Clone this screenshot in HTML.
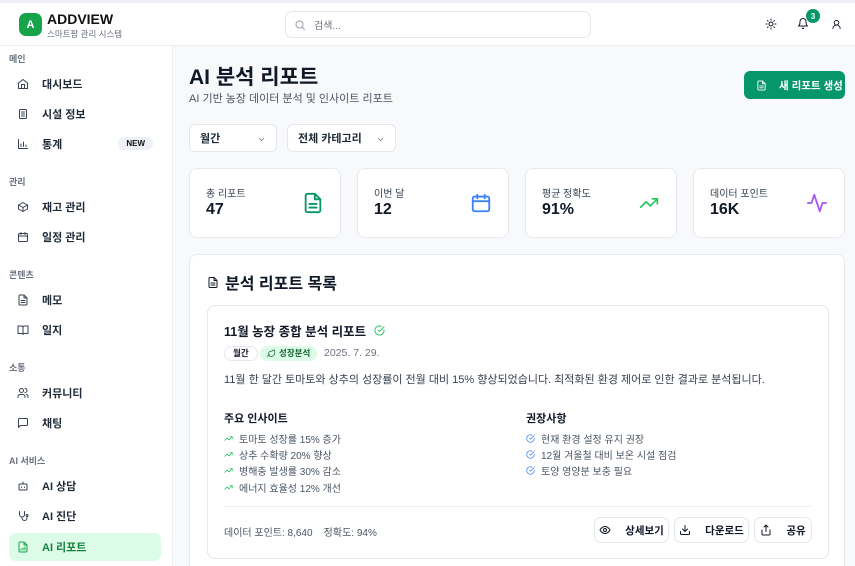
<!DOCTYPE html>
<html style="overflow:hidden;width:855px;height:566px"><head><meta charset="utf-8"><style>
*{box-sizing:border-box;margin:0;padding:0}
body{width:855px;height:566px;overflow:hidden;font-family:"Liberation Sans","Noto Sans CJK KR",sans-serif;color:#111827;background:#f8f9fb;position:relative}
.a{position:absolute}
svg{display:block}
.ic{fill:none;stroke:currentColor;stroke-width:2;stroke-linecap:round;stroke-linejoin:round}
.hdr{left:0;top:0;width:855px;height:46px;background:#fff;border-top:3px solid #eef0f5;border-bottom:1px solid #eceef2}
.side{left:0;top:46px;width:173px;height:520px;background:#fff;border-right:1px solid #eceef2}
.sec{position:absolute;left:9px;font-size:9px;color:#6b7280;font-weight:bold}
.it{position:absolute;left:9px;width:152px;height:28px;font-size:11px;font-weight:bold;color:#1f2937;display:flex;align-items:center;padding-left:8px;border-radius:7px}
.it svg{width:12px;height:12px;margin-right:13px;color:#374151}
.card{background:#fff;border:1px solid #e7e9ee;border-radius:8px}
.sel{background:#fff;border:1px solid #e5e7eb;border-radius:6px;height:28px;font-size:11px;font-weight:bold;display:flex;align-items:center;padding-left:10px;color:#1f2937}
.stat .l{position:absolute;left:16px;top:16px;font-size:10px;color:#374151}
.stat .v{position:absolute;left:16px;top:32px;font-size:16px;font-weight:bold}
.li{font-size:10px;color:#4b5563;height:16.3px;display:flex;align-items:center}
.li svg{width:9px;height:9px;margin-right:6px}
.btn{position:absolute;top:211px;height:26px;border:1px solid #e5e7eb;border-radius:7px;background:#fff;font-size:10.5px;font-weight:bold;display:flex;align-items:center;justify-content:center;gap:14px}
.btn svg{width:12px;height:12px}
</style></head><body>
<div class="a hdr">
 <div class="a" style="left:19px;top:10px;width:23px;height:23px;background:#16a34a;border-radius:7px;color:#fff;font-size:11px;font-weight:bold;display:flex;align-items:center;justify-content:center">A</div>
 <div class="a" style="left:47px;top:8px;font-size:14px;font-weight:bold;color:#111">ADDVIEW</div>
 <div class="a" style="left:47px;top:25px;font-size:8.5px;color:#6b7280">스마트팜 관리 시스템</div>
 <div class="a" style="left:285px;top:8px;width:306px;height:27px;border:1px solid #e5e7eb;border-radius:7px;display:flex;align-items:center;padding-left:8px;font-size:10px;color:#6b7280"><svg class="ic" width="12" height="12" viewBox="0 0 24 24" style="margin-right:8px;color:#9ca3af"><circle cx="11" cy="11" r="7"/><path d="M21 21l-4.3-4.3"/></svg>검색...</div>
 <svg class="a ic" style="left:765px;top:15px" width="12" height="12" viewBox="0 0 24 24"><circle cx="12" cy="12" r="4"/><path d="M12 2v2M12 20v2M4.9 4.9l1.4 1.4M17.7 17.7l1.4 1.4M2 12h2M20 12h2M6.3 17.7l-1.4 1.4M19.1 4.9l-1.4 1.4"/></svg>
 <svg class="a ic" style="left:797px;top:14px" width="12" height="13" viewBox="0 0 24 24"><path d="M6 8a6 6 0 0 1 12 0c0 7 3 9 3 9H3s3-2 3-9M10.3 21a1.9 1.9 0 0 0 3.4 0"/></svg>
 <div class="a" style="left:806px;top:6px;width:14px;height:14px;border-radius:50%;background:#059669;color:#fff;font-size:8px;font-weight:bold;display:flex;align-items:center;justify-content:center">3</div>
 <svg class="a ic" style="left:831px;top:16px" width="11" height="11" viewBox="0 0 24 24"><circle cx="12" cy="8" r="5"/><path d="M20 21a8 8 0 0 0-16 0"/></svg>
</div>
<div class="a side">
 <div class="sec" style="top:6px">메인</div>
 <div class="it" style="top:24px"><svg class="ic" viewBox="0 0 24 24"><path d="M3 10l9-7 9 7v11H3z"/><path d="M9 21v-8h6v8"/></svg>대시보드</div>
 <div class="it" style="top:54px"><svg class="ic" viewBox="0 0 24 24"><rect x="5" y="3" width="14" height="18" rx="2"/><path d="M9 8h6M9 12h6M9 16h6"/></svg>시설 정보</div>
 <div class="it" style="top:84px"><svg class="ic" viewBox="0 0 24 24"><path d="M3 3v18h18M8 17v-5M13 17V8M18 17v-3"/></svg>통계<span style="position:absolute;right:8px;top:7px;background:#eef1f6;border-radius:8px;font-size:8px;padding:2px 8px;color:#111">NEW</span></div>
 <div class="sec" style="top:129px">관리</div>
 <div class="it" style="top:147px"><svg class="ic" viewBox="0 0 24 24"><path d="M21 8l-9-5-9 5v8l9 5 9-5z"/><path d="M3 8l9 5 9-5M12 13v8"/></svg>재고 관리</div>
 <div class="it" style="top:177px"><svg class="ic" viewBox="0 0 24 24"><rect x="3" y="5" width="18" height="16" rx="2"/><path d="M3 10h18M8 3v4M16 3v4"/></svg>일정 관리</div>
 <div class="sec" style="top:222px">콘텐츠</div>
 <div class="it" style="top:240px"><svg class="ic" viewBox="0 0 24 24"><path d="M14 2H6a2 2 0 0 0-2 2v16a2 2 0 0 0 2 2h12a2 2 0 0 0 2-2V8z"/><path d="M14 2v6h6M8 13h8M8 17h8"/></svg>메모</div>
 <div class="it" style="top:270px"><svg class="ic" viewBox="0 0 24 24"><path d="M2 4h7a3 3 0 0 1 3 3v14a2 2 0 0 0-2-2H2zM22 4h-7a3 3 0 0 0-3 3v14a2 2 0 0 1 2-2h8z"/></svg>일지</div>
 <div class="sec" style="top:315px">소통</div>
 <div class="it" style="top:333px"><svg class="ic" viewBox="0 0 24 24"><circle cx="9" cy="7" r="4"/><path d="M2 21v-2a4 4 0 0 1 4-4h6a4 4 0 0 1 4 4v2M16 3a4 4 0 0 1 0 8M22 21v-2a4 4 0 0 0-3-4"/></svg>커뮤니티</div>
 <div class="it" style="top:363px"><svg class="ic" viewBox="0 0 24 24"><path d="M21 15a2 2 0 0 1-2 2H7l-4 4V5a2 2 0 0 1 2-2h14a2 2 0 0 1 2 2z"/></svg>채팅</div>
 <div class="sec" style="top:408px">AI 서비스</div>
 <div class="it" style="top:426px"><svg class="ic" viewBox="0 0 24 24"><rect x="4" y="8" width="16" height="12" rx="2"/><path d="M12 8V4M9 14v1M15 14v1"/></svg>AI 상담</div>
 <div class="it" style="top:456px"><svg class="ic" viewBox="0 0 24 24"><path d="M5 3v6a5 5 0 0 0 10 0V3M10 14v2a5 5 0 0 0 10 0v-3"/><circle cx="20" cy="11" r="2"/></svg>AI 진단</div>
 <div class="it" style="top:487px;background:#dcfce7;color:#15803d"><svg class="ic" viewBox="0 0 24 24" style="color:#16a34a"><path d="M14 2H6a2 2 0 0 0-2 2v16a2 2 0 0 0 2 2h12a2 2 0 0 0 2-2V8z"/><path d="M14 2v6h6M8 18v-2M12 18v-4M16 18v-6"/></svg>AI 리포트</div>
</div>

<div class="a" style="left:189px;top:61px;font-size:21px;font-weight:bold">AI 분석 리포트</div>
<div class="a" style="left:189px;top:90px;font-size:11px;color:#4b5563">AI 기반 농장 데이터 분석 및 인사이트 리포트</div>
<div class="a" style="left:744px;top:71px;width:101px;height:28px;background:#059669;border-radius:6px;color:#fff;font-size:10.5px;font-weight:bold;display:flex;align-items:center;padding-left:12px;gap:12px"><svg class="ic" width="11" height="11" viewBox="0 0 24 24"><path d="M14 2H6a2 2 0 0 0-2 2v16a2 2 0 0 0 2 2h12a2 2 0 0 0 2-2V8z"/><path d="M14 2v6h6M8 13h8M8 17h8"/></svg>새 리포트 생성</div>
<div class="a sel" style="left:189px;top:124px;width:88px">월간<svg class="ic a" style="right:10px;top:10px;color:#6b7280" width="9" height="9" viewBox="0 0 24 24"><path d="M6 9l6 6 6-6"/></svg></div>
<div class="a sel" style="left:287px;top:124px;width:109px">전체 카테고리<svg class="ic a" style="right:10px;top:10px;color:#6b7280" width="9" height="9" viewBox="0 0 24 24"><path d="M6 9l6 6 6-6"/></svg></div>

<div class="a card stat" style="left:189px;top:168px;width:152px;height:70px"><div class="l">총 리포트</div><div class="v">47</div><svg class="ic a" style="left:112px;top:22px;color:#059669" width="22" height="24" viewBox="0 0 24 24"><path d="M14 2H6a2 2 0 0 0-2 2v16a2 2 0 0 0 2 2h12a2 2 0 0 0 2-2V8z"/><path d="M14 2v6h6M8 13h8M8 17h8"/></svg></div>
<div class="a card stat" style="left:357px;top:168px;width:152px;height:70px"><div class="l">이번 달</div><div class="v">12</div><svg class="ic a" style="left:112px;top:22px;color:#3b82f6" width="22" height="24" viewBox="0 0 24 24"><rect x="3" y="5" width="18" height="16" rx="2"/><path d="M3 10h18M8 3v4M16 3v4"/></svg></div>
<div class="a card stat" style="left:525px;top:168px;width:152px;height:70px"><div class="l">평균 정확도</div><div class="v">91%</div><svg class="ic a" style="left:112px;top:24px;color:#22c55e" width="22" height="20" viewBox="0 0 24 24"><path d="M22 7l-8.5 8.5-5-5L2 17M16 7h6v6"/></svg></div>
<div class="a card stat" style="left:693px;top:168px;width:152px;height:70px"><div class="l">데이터 포인트</div><div class="v">16K</div><svg class="ic a" style="left:112px;top:22px;color:#a855f7" width="22" height="24" viewBox="0 0 24 24"><path d="M22 12h-4l-3 9L9 3l-3 9H2"/></svg></div>

<div class="a card" style="left:189px;top:254px;width:656px;height:312px;border-bottom:none;border-radius:8px 8px 0 0">
 <div class="a" style="left:17px;top:15px;font-size:16px;font-weight:bold;display:flex;align-items:center;gap:6px"><svg class="ic" width="12" height="13" viewBox="0 0 24 24"><path d="M14 2H6a2 2 0 0 0-2 2v16a2 2 0 0 0 2 2h12a2 2 0 0 0 2-2V8z"/><path d="M14 2v6h6M8 13h8M8 17h8"/></svg>분석 리포트 목록</div>
 <div class="a" style="left:17px;top:50px;width:622px;height:254px;border:1px solid #e5e7eb;border-radius:8px">
  <div class="a" style="left:16px;top:15px;font-size:12.5px;font-weight:bold;display:flex;align-items:center;gap:8px">11월 농장 종합 분석 리포트<svg class="ic" style="color:#22c55e" width="11" height="11" viewBox="0 0 24 24"><path d="M22 11v1a10 10 0 1 1-6-9.2"/><path d="M22 4L12 14l-3-3"/></svg></div>
  <div class="a" style="left:16px;top:40px;height:15px;border:1px solid #e5e7eb;border-radius:8px;font-size:8.5px;font-weight:bold;padding:0 8px;line-height:13px">월간</div>
  <div class="a" style="left:52px;top:40px;height:15px;background:#dcfce7;border-radius:8px;font-size:8.5px;font-weight:bold;padding:0 7px;line-height:15px;color:#166534;display:flex;align-items:center;gap:3px"><svg class="ic" width="9" height="9" viewBox="0 0 24 24"><path d="M11 20A7 7 0 0 1 9.8 6.1C15.5 5 17 4.5 19 2c1 2 2 4.2 2 8 0 5.5-4.8 10-10 10zM2 21c0-3 1.9-5.4 5-6"/></svg>성장분석</div>
  <div class="a" style="left:116px;top:41px;font-size:10.5px;color:#6b7280">2025. 7. 29.</div>
  <div class="a" style="left:16px;top:65px;font-size:11px;color:#374151">11월 한 달간 토마토와 상추의 성장률이 전월 대비 15% 향상되었습니다. 최적화된 환경 제어로 인한 결과로 분석됩니다.</div>
  <div class="a" style="left:16px;top:104px;font-size:11px;font-weight:bold">주요 인사이트</div>
  <div class="a" style="left:16px;top:124px">
   <div class="li"><svg class="ic" style="color:#22c55e" viewBox="0 0 24 24"><path d="M22 7l-8.5 8.5-5-5L2 17M16 7h6v6"/></svg>토마토 성장률 15% 증가</div>
   <div class="li"><svg class="ic" style="color:#22c55e" viewBox="0 0 24 24"><path d="M22 7l-8.5 8.5-5-5L2 17M16 7h6v6"/></svg>상추 수확량 20% 향상</div>
   <div class="li"><svg class="ic" style="color:#22c55e" viewBox="0 0 24 24"><path d="M22 7l-8.5 8.5-5-5L2 17M16 7h6v6"/></svg>병해충 발생률 30% 감소</div>
   <div class="li"><svg class="ic" style="color:#22c55e" viewBox="0 0 24 24"><path d="M22 7l-8.5 8.5-5-5L2 17M16 7h6v6"/></svg>에너지 효율성 12% 개선</div>
  </div>
  <div class="a" style="left:318px;top:104px;font-size:11px;font-weight:bold">권장사항</div>
  <div class="a" style="left:318px;top:124px">
   <div class="li"><svg class="ic" style="color:#3b82f6" viewBox="0 0 24 24"><path d="M22 11v1a10 10 0 1 1-6-9.2"/><path d="M22 4L12 14l-3-3"/></svg>현재 환경 설정 유지 권장</div>
   <div class="li"><svg class="ic" style="color:#3b82f6" viewBox="0 0 24 24"><path d="M22 11v1a10 10 0 1 1-6-9.2"/><path d="M22 4L12 14l-3-3"/></svg>12월 겨울철 대비 보온 시설 점검</div>
   <div class="li"><svg class="ic" style="color:#3b82f6" viewBox="0 0 24 24"><path d="M22 11v1a10 10 0 1 1-6-9.2"/><path d="M22 4L12 14l-3-3"/></svg>토양 영양분 보충 필요</div>
  </div>
  <div class="a" style="left:16px;top:200px;width:588px;height:1px;background:#eceef2"></div>
  <div class="a" style="left:16px;top:218px;font-size:10px;color:#4b5563">데이터 포인트: 8,640 &nbsp;&nbsp; 정확도: 94%</div>
  <div class="btn" style="left:386px;width:75px"><svg class="ic" viewBox="0 0 24 24"><path d="M2 12s3.5-7 10-7 10 7 10 7-3.5 7-10 7S2 12 2 12z"/><circle cx="12" cy="12" r="3"/></svg>상세보기</div>
  <div class="btn" style="left:466px;width:75px"><svg class="ic" viewBox="0 0 24 24"><path d="M21 15v4a2 2 0 0 1-2 2H5a2 2 0 0 1-2-2v-4M7 10l5 5 5-5M12 15V3"/></svg>다운로드</div>
  <div class="btn" style="left:546px;width:58px"><svg class="ic" viewBox="0 0 24 24"><path d="M4 12v8a2 2 0 0 0 2 2h12a2 2 0 0 0 2-2v-8M16 6l-4-4-4 4M12 2v13"/></svg>공유</div>
 </div>
</div>
</body></html>
